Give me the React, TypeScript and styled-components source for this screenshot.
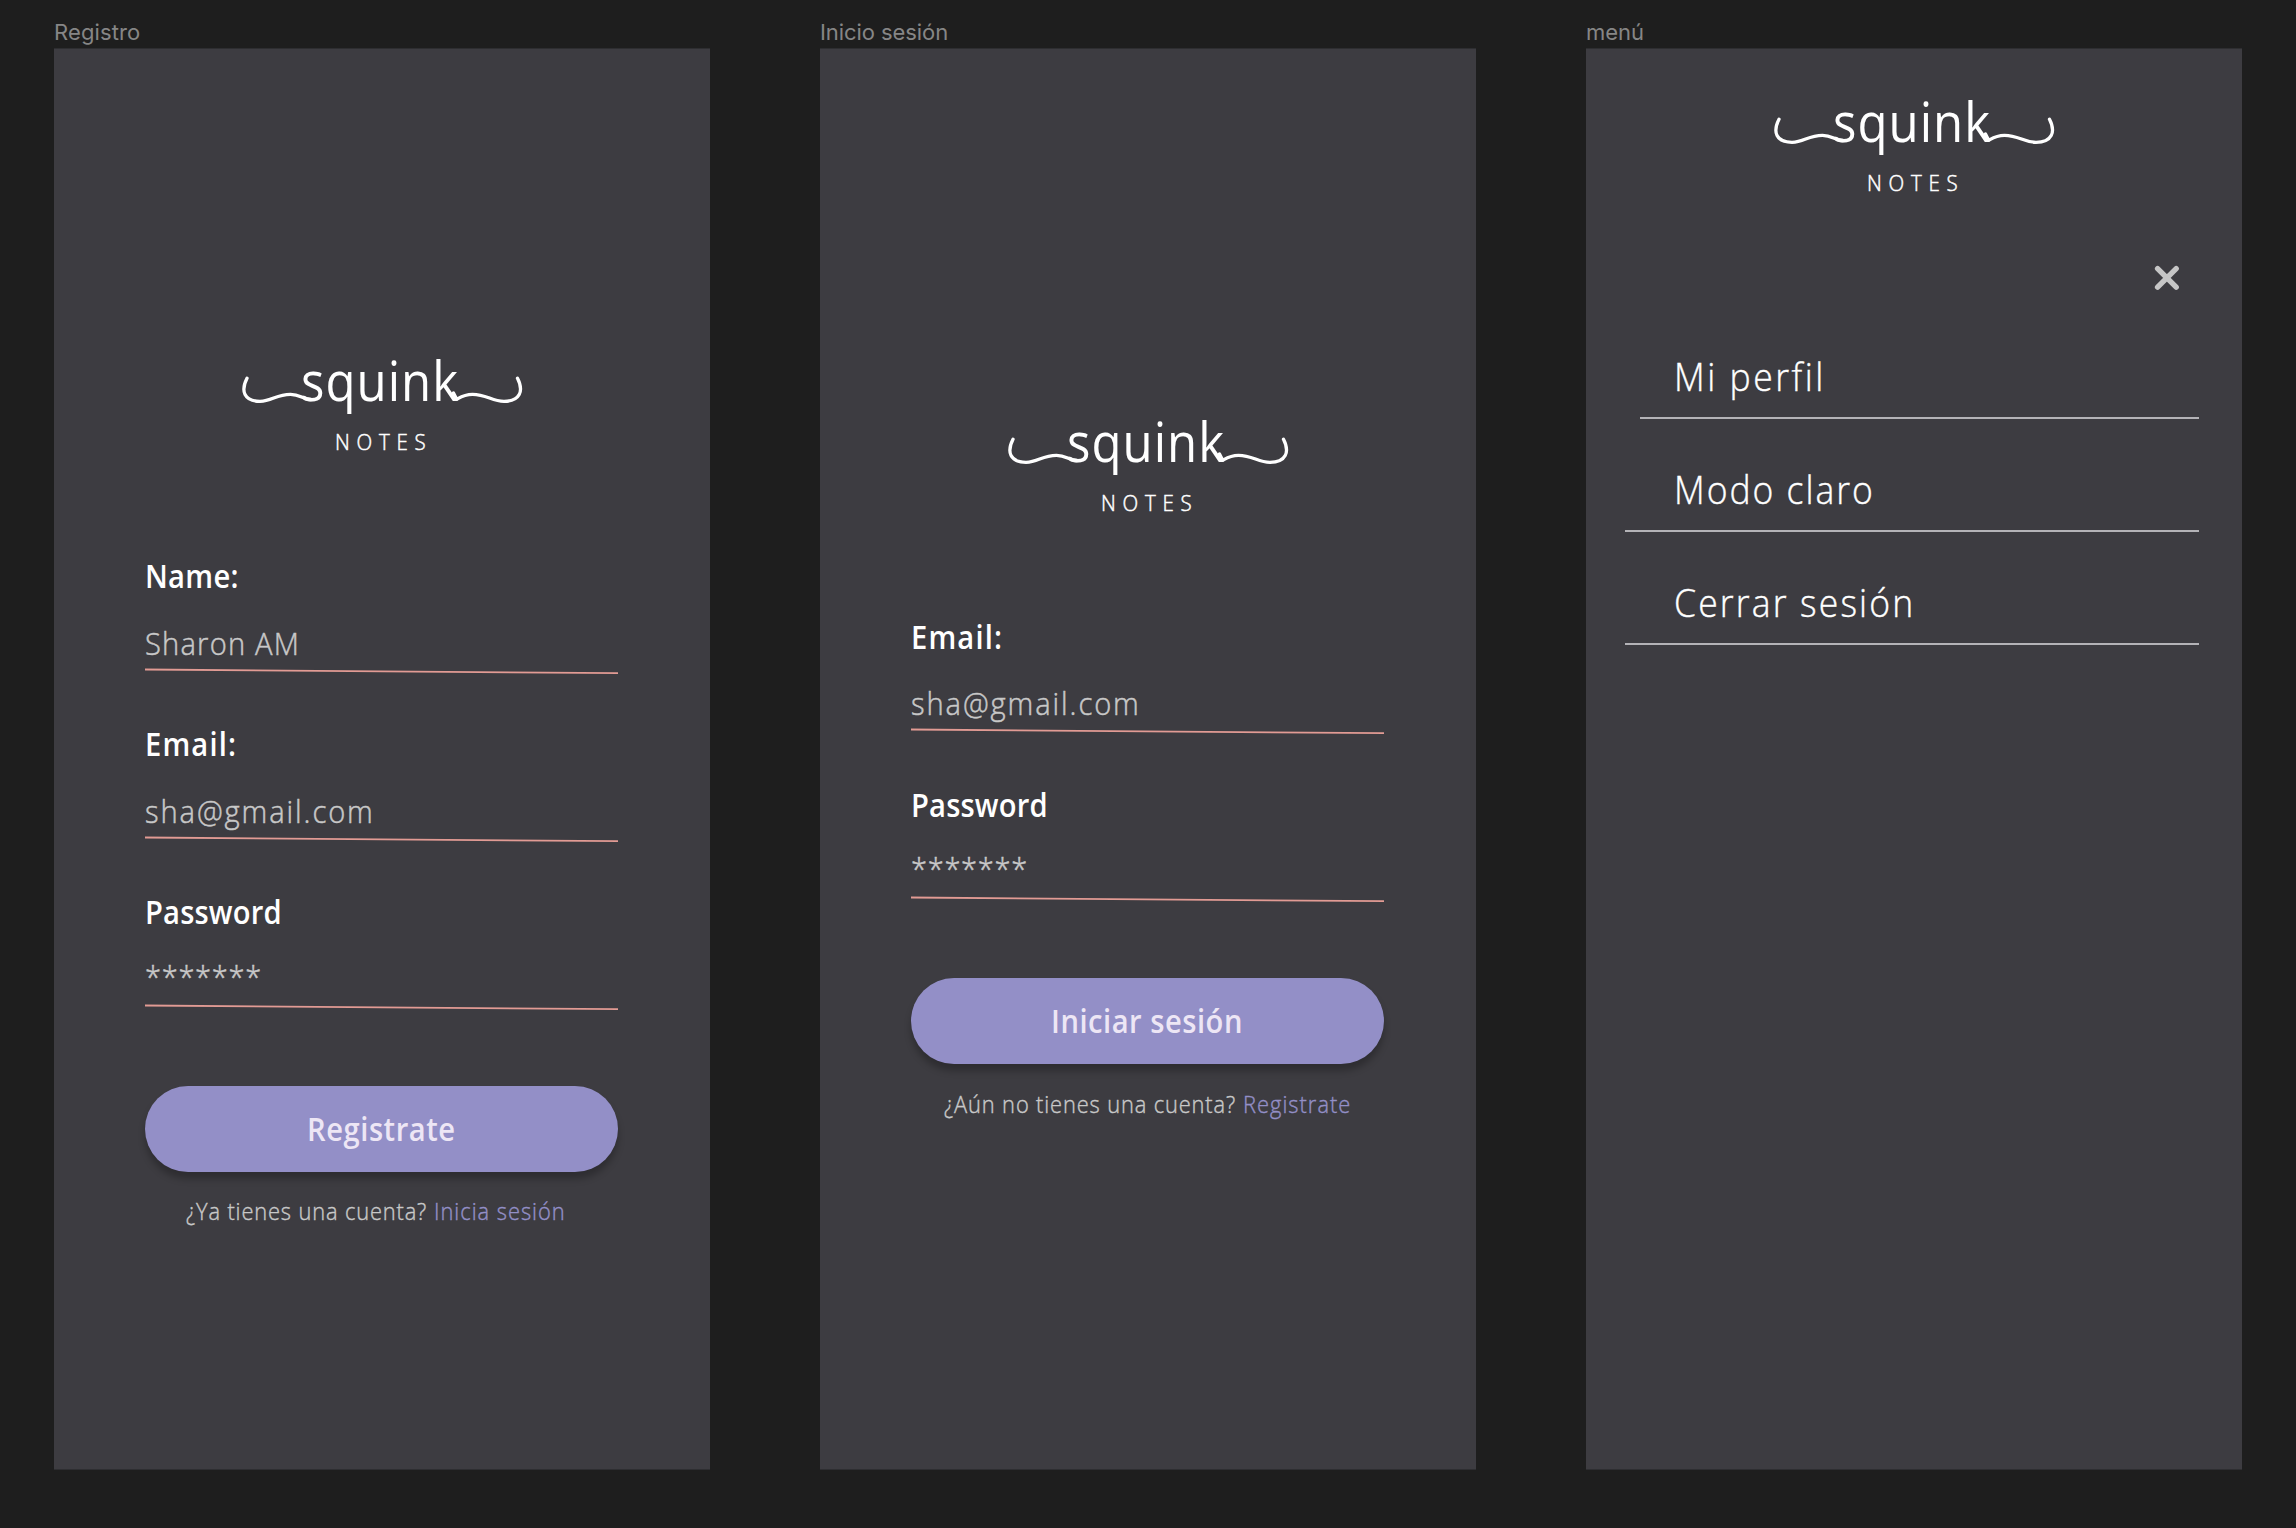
import React, { useLayoutEffect, useRef, useState } from 'react';
import styled, { createGlobalStyle } from 'styled-components';

const GlobalStyle = createGlobalStyle`
  * { box-sizing: border-box; }
  body { margin: 0; background: #1e1e1e; }
`;

const Canvas = styled.main`
  display: flex;
  gap: 110px;
  width: 2296px;
  height: 1528px;
  padding: 16px 54px 0;
  overflow: hidden;
  background: #1e1e1e;
  font-family: 'Open Sans', 'Noto Sans', sans-serif;
`;

const Artboard = styled.section`
  display: flex;
  flex-direction: column;
  flex: 0 0 656px;
`;

const ArtboardName = styled.div`
  height: 32px;
  font-family: Inter, sans-serif;
  font-size: 22px;
  line-height: 32px;
  color: #868686;
  white-space: nowrap;
`;

const Screen = styled.div<{ $top: number }>`
  display: flex;
  flex-direction: column;
  height: 1422px;
  padding-top: ${p => p.$top}px;
  border-top: 1px solid #2e2e31;
  border-bottom: 1px solid #2e2e31;
  background: #3d3c41;
`;

const LogoBox = styled.div`
  position: relative;
  display: flex;
  flex-direction: column;
  align-items: center;
  align-self: center;
  gap: 17px;
  width: 320px;
  height: 107px;
  color: #fff;
`;

const Flourish = styled.svg`
  position: absolute;
  left: -2px;
  top: -10px;
`;

const Word = styled.div`
  margin-right: 4px;
  font-size: 54px;
  font-weight: 400;
  line-height: 60px;
`;

const Sub = styled.div`
  padding-left: 3px;
  font-size: 22.5px;
  font-weight: 300;
  line-height: 30px;
  -webkit-text-stroke: 0.5px currentColor;
`;

const Form = styled.div`
  display: flex;
  flex-direction: column;
  gap: 48.4px;
  padding: 99px 92px 0 90.5px;
`;

const Field = styled.div`
  display: flex;
  flex-direction: column;
`;

const Label = styled.div`
  font-size: 32px;
  font-weight: 600;
  line-height: 40px;
  color: #fff;
`;

const Value = styled.div<{ $masked?: boolean }>`
  height: 40px;
  margin-top: 26.6px;
  font-size: 32px;
  font-weight: 300;
  line-height: ${p => (p.$masked ? 33 : 40)}px;
  color: #c8c8c8;
  -webkit-text-stroke: 0.5px currentColor;
`;

const Underline = styled.svg`
  display: block;
  width: 100%;
  height: 8px;
  margin-top: 5px;
`;

const Button = styled.button`
  height: 86px;
  margin: 74px 92px 0 90.5px;
  padding: 0;
  border: 0;
  border-radius: 43px;
  background: #938fc7;
  box-shadow: 0 7px 7px rgba(0, 0, 0, 0.25);
  font: inherit;
  font-size: 32px;
  font-weight: 600;
  line-height: 40px;
  color: #ede6f5;
`;

const Footnote = styled.p<{ $shift?: number }>`
  display: flex;
  justify-content: center;
  gap: 7px;
  margin: 24.7px 0 0;
  padding-right: ${p => 12 - (p.$shift ?? 0)}px;
  font-size: 24px;
  font-weight: 300;
  line-height: 30px;
  color: #c8c8c8;
  -webkit-text-stroke: 0.4px currentColor;
`;

const Link = styled.span`
  color: #938fc7;
`;

const CloseIcon = styled.svg`
  align-self: flex-end;
  margin: 67px 62.5px 15px 0;
`;

const MenuItem = styled.div<{ $indent: number }>`
  display: flex;
  align-items: flex-end;
  height: 112.9px;
  margin: 0 43px 0 ${p => p.$indent}px;
  padding: 0 0 16px ${p => 87.5 - p.$indent}px;
  border-bottom: 2px solid #b4b3b7;
  font-size: 39px;
  font-weight: 300;
  line-height: 50px;
  color: #fff;
  -webkit-text-stroke: 0.4px currentColor;
`;

const FittedBox = styled.span`
  display: inline-block;
  vertical-align: top;
  text-align: left;
  white-space: nowrap;
`;

const FittedText = styled.span`
  display: inline-block;
  vertical-align: top;
  transform-origin: 0 50%;
`;

/** Condenses its glyphs by `scale`, then tracks them out to fill the given width. */
function Fit({ width, scale = 0.91, children }: { width: number; scale?: number; children: string }) {
  const ref = useRef<HTMLSpanElement>(null);
  const [tracking, setTracking] = useState(0);
  useLayoutEffect(() => {
    setTracking((width / scale - ref.current!.offsetWidth) / children.length);
  }, []);
  return (
    <FittedBox style={{ width }}>
      <FittedText ref={ref} style={{ letterSpacing: tracking, transform: `scaleX(${scale})` }}>
        {children}
      </FittedText>
    </FittedBox>
  );
}

function Logo() {
  return (
    <LogoBox>
      <Flourish width="320" height="130" viewBox="0 0 320 130" fill="none" stroke="#fff" strokeWidth="3.3" strokeLinecap="round" strokeLinejoin="round">
        <path d="M27 38.3C20.5 51 24 61.3 40 61.3C52 61.3 56 54.3 70.5 54.3C80.5 54.3 82.5 59.5 91 59.5" />
        <path d="M297.5 38.3C304 51 300 61.3 284 61.3C272 61.3 266.5 54.3 252.5 54.3C244.5 54.3 241.5 56.5 236.7 59.3L233.5 53" />
      </Flourish>
      <Word><Fit width={158}>squink</Fit></Word>
      <Sub><Fit width={97.5}>NOTES</Fit></Sub>
    </LogoBox>
  );
}

interface TextFieldProps {
  label: string;
  labelWidth: number;
  value: string;
  valueWidth: number;
  masked?: boolean;
}

function TextField({ label, labelWidth, value, valueWidth, masked }: TextFieldProps) {
  return (
    <Field>
      <Label><Fit width={labelWidth}>{label}</Fit></Label>
      <Value $masked={masked}><Fit width={valueWidth}>{value}</Fit></Value>
      <Underline viewBox="0 0 473.5 8" preserveAspectRatio="none">
        <path d="M0 1.5L473.5 5.2" stroke="#e29b94" strokeWidth="1.8" />
      </Underline>
    </Field>
  );
}

const emailField = <TextField label="Email:" labelWidth={92.5} value="sha@gmail.com" valueWidth={229.5} />;
const passwordField = <TextField label="Password" labelWidth={137} value="*******" valueWidth={116.5} masked />;

export default function App() {
  return (
    <>
      <GlobalStyle />
      <Canvas>
        <Artboard>
          <ArtboardName><Fit width={86} scale={1}>Registro</Fit></ArtboardName>
          <Screen $top={301}>
            <Logo />
            <Form>
              <TextField label="Name:" labelWidth={93.5} value="Sharon AM" valueWidth={155.5} />
              {emailField}
              {passwordField}
            </Form>
            <Button><Fit width={148.5}>Registrate</Fit></Button>
            <Footnote>
              <Fit width={241}>¿Ya tienes una cuenta?</Fit>
              <Link><Fit width={132}>Inicia sesión</Fit></Link>
            </Footnote>
          </Screen>
        </Artboard>
        <Artboard>
          <ArtboardName><Fit width={128} scale={1}>Inicio sesión</Fit></ArtboardName>
          <Screen $top={361.7}>
            <Logo />
            <Form>
              {emailField}
              {passwordField}
            </Form>
            <Button><Fit width={192}>Iniciar sesión</Fit></Button>
            <Footnote $shift={14}>
              <Fit width={292}>¿Aún no tienes una cuenta?</Fit>
              <Link><Fit width={108.5}>Registrate</Fit></Link>
            </Footnote>
          </Screen>
        </Artboard>
        <Artboard>
          <ArtboardName><Fit width={58} scale={1}>menú</Fit></ArtboardName>
          <Screen $top={42}>
            <Logo />
            <CloseIcon width="26" height="26" viewBox="0 0 26 26" stroke="#c6c6c6" strokeWidth="5.4" strokeLinecap="round">
              <path d="M3.6 3.6L22.2 22.2M22.2 3.6L3.6 22.2" />
            </CloseIcon>
            <MenuItem $indent={53.5}><Fit width={152}>Mi perfil</Fit></MenuItem>
            <MenuItem $indent={38.5}><Fit width={201}>Modo claro</Fit></MenuItem>
            <MenuItem $indent={38.5}><Fit width={241}>Cerrar sesión</Fit></MenuItem>
          </Screen>
        </Artboard>
      </Canvas>
    </>
  );
}
